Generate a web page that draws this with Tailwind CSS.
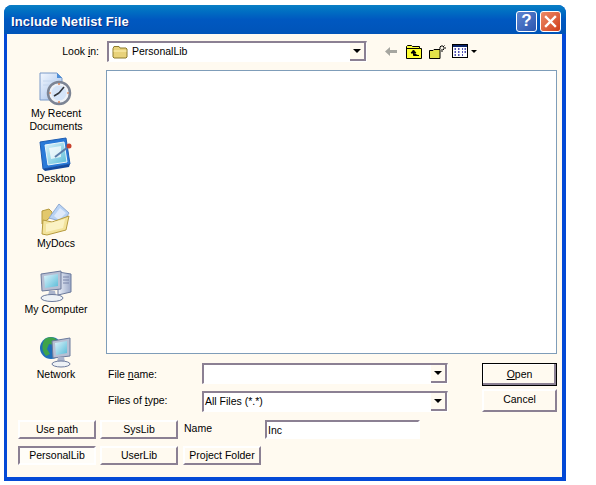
<!DOCTYPE html>
<html lang="en">
<head>
    <meta charset="UTF-8">
    <title>Include Netlist File</title>
    <script src="https://cdn.jsdelivr.net/npm/@tailwindcss/browser@4"></script>
</head>
<body class="bg-white w-[596px] h-[485px] overflow-hidden font-['Liberation_Sans',sans-serif] text-[10.5px] text-black">
<div class="ml-[4px] mt-[5px] w-[562px] h-[476px] flex flex-col rounded-t-[8px] bg-[#0349d6] overflow-hidden">
    <!-- title bar -->
    <div class="h-[29px] shrink-0 flex items-center pl-[7px] pr-[5px] bg-gradient-to-b from-[#0a7fc4] via-[#0058c0] to-[#0054b8]">
        <div class="text-white font-bold text-[13px] tracking-[0.15px] [text-shadow:1px_1px_0_#0a2f80] mt-[4px]">Include Netlist File</div>
        <div class="ml-auto flex gap-[3px] mt-[3px]">
            <div class="w-[21px] h-[21px] rounded-[3px] border border-white bg-gradient-to-br from-[#5f86d0] to-[#2a55b0] flex items-center justify-center text-white font-bold text-[17px]">?</div>
            <div class="w-[21px] h-[21px] rounded-[3px] border border-white bg-gradient-to-br from-[#ec8a66] to-[#cf3a16] flex items-center justify-center">
                <svg width="13" height="13" viewBox="0 0 13 13"><path d="M2 2L11 11M11 2L2 11" stroke="#fff" stroke-width="2.4" stroke-linecap="square"/></svg>
            </div>
        </div>
    </div>
    <!-- client area -->
    <div class="ml-[3px] mr-[4px] mb-[4px] flex-1 bg-[#fffaf0] flex flex-col">
        <div class="flex items-center h-[21px] mt-[7px]">
            <div class="w-[92px] text-right">Look <u>i</u>n:</div>
            <div class="ml-[8px] w-[260px] h-[21px] flex items-center bg-white border-2 border-r-[1px] border-b-[1px] border-t-[#8b8093] border-l-[#8b8093] border-r-white border-b-white">
                <svg class="ml-[3px]" width="16" height="14" viewBox="0 0 16 14"><path d="M1 3.500L2 1.500H7L8 3H14L15 4V12L14 13H2L1 12Z" fill="#e8d27a" stroke="#8c7a2c"/><path d="M1.500 6H14.500" stroke="#fff3b8"/></svg>
                <span class="ml-[4px]">PersonalLib</span>
                <div class="ml-auto w-[16px] h-[18px] bg-[#fffaf0] border-r-2 border-b-2 border-[#8b8093] flex items-center justify-center">
                    <div class="w-0 h-0 border-x-[4px] border-x-transparent border-t-[4px] border-t-black"></div>
                </div>
            </div>
            <svg class="ml-[18px]" width="13" height="11" viewBox="0 0 13 11"><path d="M0 5.500L5 1V4H12V7H5V10Z" fill="#a6a6a0"/></svg>
            <svg class="ml-[8px]" width="16" height="14" viewBox="0 0 16 14"><path d="M0.500 13.500V1.500L1.500 0.500H5.500L6.500 1.500H13.500V3.500H15.500V13.500Z" fill="#ffff33" stroke="#000"/><path d="M0.500 3.500H13.500" stroke="#000"/><path d="M7.500 5L5 8H10L7.500 5ZM7.500 8V10.500H13" fill="#000" stroke="#000"/></svg>
            <svg class="ml-[7px]" width="17" height="15" viewBox="0 0 17 15"><path d="M0.500 14.500V6.500H4L5 5.500H11V14.500Z" fill="#e2e24a" stroke="#000"/><path d="M13 1V3M13 5V8M10 4H12M14 4H17M11 2L12 3M15.500 1.500L14 3M15 6L14 5" stroke="#000"/></svg>
            <svg class="ml-[6px]" width="17" height="15" viewBox="0 0 17 15"><rect x="0.500" y="0.500" width="15" height="13" fill="#fff" stroke="#000"/><rect x="1" y="1" width="14" height="2" fill="#0a246a"/><path d="M2.500 5H4M6 5H7.500M10 5H11M12.500 5H14M2.500 8H4M6 8H7.500M10 8H11M12.500 8H14M2.500 11H4M6 11H7.500M10 11H11" stroke="#1a1a9a" stroke-width="1.500"/></svg>
            <div class="ml-[2px] w-0 h-0 border-x-[3px] border-x-transparent border-t-[3px] border-t-black"></div>
        </div>
        <div class="flex mt-[8px]">
            <!-- places -->
            <div class="w-[99px] shrink-0 flex flex-col items-center text-center leading-[13px] pr-[1px]">
                <svg class="mt-[2px]" width="34" height="34" viewBox="0 0 34 34">
                    <defs>
                        <linearGradient id="page" x1="0" y1="0" x2="1" y2="1"><stop offset="0" stop-color="#f4f8ff"/><stop offset="1" stop-color="#9fbde8"/></linearGradient>
                        <linearGradient id="scr" x1="0" y1="0" x2="1" y2="1"><stop offset="0" stop-color="#dff3fb"/><stop offset="1" stop-color="#58bcd8"/></linearGradient>
                        <linearGradient id="case" x1="0" y1="0" x2="1" y2="0"><stop offset="0" stop-color="#eef2fa"/><stop offset="1" stop-color="#9aa8c8"/></linearGradient>
                    </defs>
                    <path d="M1 1H18L23 6V28H1Z" fill="url(#page)" stroke="#7b9ac8"/>
                    <path d="M18 1L23 6H18Z" fill="#4f8fd8"/>
                    <path d="M4 9H16M4 13H12" stroke="#c4d6ee"/>
                    <circle cx="20" cy="21" r="11" fill="#eef1f6" stroke="#7c8494" stroke-width="2.500"/>
                    <circle cx="20" cy="21" r="7.500" fill="#d5e4f8"/>
                    <path d="M20 21L25 15M20 21L15 24" stroke="#33363c" stroke-width="1.600"/>
                    <path d="M20 11V13M20 29V31M10 21H12M28 21H30" stroke="#d86a30" stroke-width="1.200"/>
                </svg>
                <div class="mt-[1px]">My Recent<br>Documents</div>
                <svg class="mt-[4px]" width="34" height="34" viewBox="0 0 34 34">
                    <path d="M1 5L27 1L31 27L4 32Z" fill="#2a7ad8" stroke="#1f5cb0" stroke-linejoin="round"/>
                    <path d="M6 8L25 5L28 25L9 28Z" fill="url(#scr)" stroke="#e9f6fb"/>
                    <path d="M10 11L22 9V20L12 22Z" fill="#fff" opacity=".7"/>
                    <path d="M16 20L29 10" stroke="#5a7ca8" stroke-width="2"/>
                    <circle cx="30" cy="9" r="2.500" fill="#c8402c"/>
                    <path d="M4 32L31 27L30 30L6 34Z" fill="#144a9e"/>
                </svg>
                <div class="mt-[1px]">Desktop</div>
                <svg class="mt-[17px]" width="34" height="34" viewBox="0 0 34 34">
                    <path d="M3 9L10 7L13 10V14L3 22Z" fill="#e2c86c" stroke="#b59a3e"/>
                    <path d="M10 16L20 2L30 11L24 20Z" fill="#b9d3f4" stroke="#8fa9d2"/>
                    <path d="M15 14L21 6L27 11L20 18Z" fill="#dfeafb"/>
                    <path d="M3 32L4 18L13 20L30 14L27 28L8 33Z" fill="#f3e39c" stroke="#b59a3e"/>
                    <path d="M7 22L26 17L24 26L7 30Z" fill="#fbf2c4"/>
                </svg>
                <div class="mt-[1px]">MyDocs</div>
                <svg class="mt-[19px]" width="34" height="34" viewBox="0 0 34 34">
                    <path d="M19 3L32 5V23L19 26Z" fill="url(#case)" stroke="#6c7a9c"/>
                    <path d="M24 8H30M24 11H30M24 14H30" stroke="#7884a8"/>
                    <path d="M2 5L22 2V20L3 22Z" fill="#b8c0d4" stroke="#6c7a9c"/>
                    <path d="M5 7L19 5V17L6 19Z" fill="url(#scr)"/>
                    <path d="M10 22H16L17 27H9Z" fill="#aab4cc"/>
                    <ellipse cx="13" cy="29" rx="11" ry="3.500" fill="#eef2f6" stroke="#6c7a9c"/>
                </svg>
                <div>My Computer</div>
                <svg class="mt-[18px]" width="34" height="34" viewBox="0 0 34 34">
                    <circle cx="12" cy="14" r="11" fill="#1f6fb8"/>
                    <path d="M6 5C10 2 16 3 18 6L15 11L10 10L8 15L11 20L7 22C3 18 2 10 6 5Z" fill="#3fa34a"/>
                    <path d="M13 7L31 4V22L14 24Z" fill="#b8c0d4" stroke="#6c7a9c"/>
                    <path d="M16 9L28 7V19L17 21Z" fill="url(#scr)"/>
                    <path d="M19 23H25L26 28H18Z" fill="#aab4cc"/>
                    <ellipse cx="22" cy="30" rx="9" ry="3" fill="#eef2f6" stroke="#6c7a9c"/>
                </svg>
                <div>Network</div>
            </div>
            <!-- list and file fields -->
            <div class="w-[451px]">
                <div class="h-[284px] bg-white border border-[#7f9db9]"></div>
                <div class="flex h-[23px] mt-[9px]">
                    <div class="w-[96px] pl-[2px] pt-[4px]">File <u>n</u>ame:</div>
                    <div class="w-[246px] h-[21px] flex justify-end bg-white border-2 border-r-[1px] border-b-[1px] border-t-[#8b8093] border-l-[#8b8093] border-r-white border-b-white">
                        <div class="w-[16px] h-[18px] bg-[#fffaf0] border-r-2 border-b-2 border-[#8b8093] flex items-center justify-center">
                            <div class="w-0 h-0 border-x-[4px] border-x-transparent border-t-[4px] border-t-black"></div>
                        </div>
                    </div>
                    <div class="ml-[34px] w-[75px] h-[23px] bg-[#fffaf0] border border-black shadow-[inset_-2px_-2px_0_#8b8093,inset_1px_1px_0_#fff] flex items-center justify-center"><span><u>O</u>pen</span></div>
                </div>
                <div class="flex h-[23px] mt-[3px]">
                    <div class="w-[96px] pl-[2px] pt-[4px]">Files of <u>t</u>ype:</div>
                    <div class="w-[246px] h-[21px] mt-[2px] flex items-center justify-between pl-[1px] bg-white border-2 border-r-[1px] border-b-[1px] border-t-[#8b8093] border-l-[#8b8093] border-r-white border-b-white">
                        <span>All Files (*.*)</span>
                        <div class="w-[16px] h-[18px] bg-[#fffaf0] border-r-2 border-b-2 border-[#8b8093] flex items-center justify-center">
                            <div class="w-0 h-0 border-x-[4px] border-x-transparent border-t-[4px] border-t-black"></div>
                        </div>
                    </div>
                    <div class="ml-[34px] w-[75px] h-[23px] pb-[1px] bg-[#fffaf0] border-2 border-t-white border-l-white border-r-[#8b8093] border-b-[#8b8093] flex items-center justify-center">Cancel</div>
                </div>
            </div>
        </div>
        <!-- library buttons -->
        <div class="flex ml-[11px] mt-[8px] h-[19px]">
            <div class="w-[78px] pt-[1px] bg-[#fffaf0] border-2 border-t-white border-l-white border-r-[#8b8093] border-b-[#8b8093] flex items-center justify-center">Use path</div>
            <div class="ml-[4px] w-[78px] pt-[1px] bg-[#fffaf0] border-2 border-t-white border-l-white border-r-[#8b8093] border-b-[#8b8093] flex items-center justify-center">SysLib</div>
            <div class="ml-[6px] w-[81px] pt-[1px]">Name</div>
            <div class="w-[155px] bg-white border-2 border-t-[#8b8093] border-l-[#8b8093] border-r-white border-b-white pl-[1px] pt-[1px]">Inc</div>
        </div>
        <div class="flex ml-[11px] mt-[7px] h-[19px]">
            <div class="w-[78px] bg-[#fffdf8] border-2 border-t-[#8b8093] border-l-[#8b8093] border-r-white border-b-white flex items-center justify-center">PersonalLib</div>
            <div class="ml-[4px] w-[78px] bg-[#fffaf0] border-2 border-t-white border-l-white border-r-[#8b8093] border-b-[#8b8093] flex items-center justify-center">UserLib</div>
            <div class="ml-[5px] w-[78px] bg-[#fffaf0] border-2 border-t-white border-l-white border-r-[#8b8093] border-b-[#8b8093] flex items-center justify-center">Project Folder</div>
        </div>
    </div>
</div>
</body>
</html>
